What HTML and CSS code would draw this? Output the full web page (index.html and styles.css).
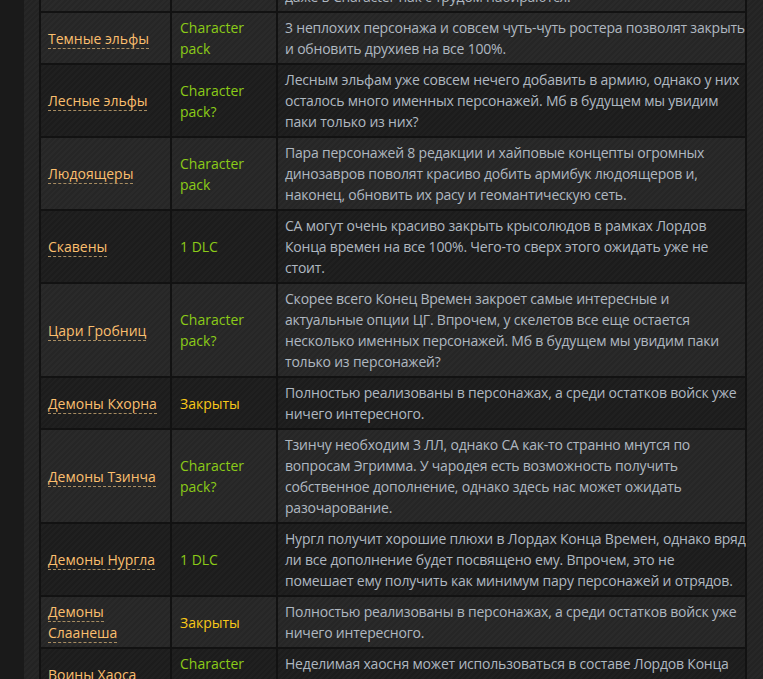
FILE: index.html
```html
<!DOCTYPE html>
<html lang="ru">
<head>
<meta charset="utf-8">
<title>Таблица рас</title>
<link rel="stylesheet" href="styles.css">
</head>
<body>
<div class="page">
  <table class="races">
    <colgroup><col class="c-name"><col class="c-type"><col class="c-desc"></colgroup>
    <tr class="light">
      <td><span class="name">Норска</span></td>
      <td class="green">1 DLC</td>
      <td class="desc">Остатков ростера не так много, и оставшиеся юниты<br>даже в Character пак с трудом набираются.</td>
    </tr>
    <tr class="light">
      <td><span class="name">Темные эльфы</span></td>
      <td class="green">Character pack</td>
      <td class="desc">3 неплохих персонажа и совсем чуть-чуть ростера позволят закрыть<br>и обновить друхиев на все 100%.</td>
    </tr>
    <tr class="dark">
      <td><span class="name">Лесные эльфы</span></td>
      <td class="green">Character pack?</td>
      <td class="desc">Лесным эльфам уже совсем нечего добавить в армию, однако у них<br>осталось много именных персонажей. Мб в будущем мы увидим<br>паки только из них?</td>
    </tr>
    <tr class="light">
      <td><span class="name">Людоящеры</span></td>
      <td class="green">Character pack</td>
      <td class="desc">Пара персонажей 8 редакции и хайповые концепты огромных<br>динозавров поволят красиво добить армибук людоящеров и,<br>наконец, обновить их расу и геомантическую сеть.</td>
    </tr>
    <tr class="dark">
      <td><span class="name">Скавены</span></td>
      <td class="green">1 DLC</td>
      <td class="desc">СА могут очень красиво закрыть крысолюдов в рамках Лордов<br>Конца времен на все 100%. Чего-то сверх этого ожидать уже не<br>стоит.</td>
    </tr>
    <tr class="light">
      <td><span class="name">Цари Гробниц</span></td>
      <td class="green">Character pack?</td>
      <td class="desc">Скорее всего Конец Времен закроет самые интересные и<br>актуальные опции ЦГ. Впрочем, у скелетов все еще остается<br>несколько именных персонажей. Мб в будущем мы увидим паки<br>только из персонажей?</td>
    </tr>
    <tr class="dark">
      <td><span class="name">Демоны Кхорна</span></td>
      <td class="yellow">Закрыты</td>
      <td class="desc">Полностью реализованы в персонажах, а среди остатков войск уже<br>ничего интересного.</td>
    </tr>
    <tr class="light">
      <td><span class="name">Демоны Тзинча</span></td>
      <td class="green">Character pack?</td>
      <td class="desc">Тзинчу необходим 3 ЛЛ, однако СА как-то странно мнутся по<br>вопросам Эгримма. У чародея есть возможность получить<br>собственное дополнение, однако здесь нас может ожидать<br>разочарование.</td>
    </tr>
    <tr class="dark">
      <td><span class="name">Демоны Нургла</span></td>
      <td class="green">1 DLC</td>
      <td class="desc">Нургл получит хорошие плюхи в Лордах Конца Времен, однако вряд<br>ли все дополнение будет посвящено ему. Впрочем, это не<br>помешает ему получить как минимум пару персонажей и отрядов.</td>
    </tr>
    <tr class="light">
      <td><span class="name">Демоны Слаанеша</span></td>
      <td class="yellow">Закрыты</td>
      <td class="desc">Полностью реализованы в персонажах, а среди остатков войск уже<br>ничего интересного.</td>
    </tr>
    <tr class="dark">
      <td><span class="name">Воины Хаоса</span></td>
      <td class="green">Character pack?</td>
      <td class="desc">Неделимая хаосня может использоваться в составе Лордов Конца<br>Времен, но вряд ли получит что-то свое.</td>
    </tr>
  </table>
</div>
</body>
</html>
```
FILE: styles.css
```css
html, body {
  margin: 0;
  padding: 0;
  background: #1a1a1a;
  overflow: hidden;
}
body {
  font-family: "Open Sans", "Noto Sans", sans-serif;
  font-size: 14px;
  line-height: 21px;
}
.page {
  margin-left: 24px;
  margin-top: -41px;
  padding: 0 15px;
  min-height: 760px;
  background: repeating-linear-gradient(135deg, #232323 0px, #232323 2px, #272727 2px, #272727 4px);
}
.races {
  width: 708px;
  table-layout: fixed;
  border-collapse: separate;
  border-spacing: 2px;
  background: #121212;
}
.c-name { width: 129px; }
.c-type { width: 104px; }
.c-desc { width: 467px; }
.races td {
  padding: 4px 7px 4px 7px;
  vertical-align: middle;
}
.races td:nth-child(2) { padding-left: 8px; }
tr.light td {
  background: repeating-linear-gradient(135deg, #262626 0px, #262626 2px, #2a2a2a 2px, #2a2a2a 4px);
}
tr.dark td {
  background: repeating-linear-gradient(135deg, #1c1c1c 0px, #1c1c1c 2px, #202020 2px, #202020 4px);
}
.name {
  color: #fbbf6e;
  border-bottom: 1px dashed #a88d62;
}
.green { color: #8bcb18; }
.yellow { color: #f8c818; }
.desc {
  color: #afb8c1;
  white-space: nowrap;
  letter-spacing: -0.2px;
}
```
